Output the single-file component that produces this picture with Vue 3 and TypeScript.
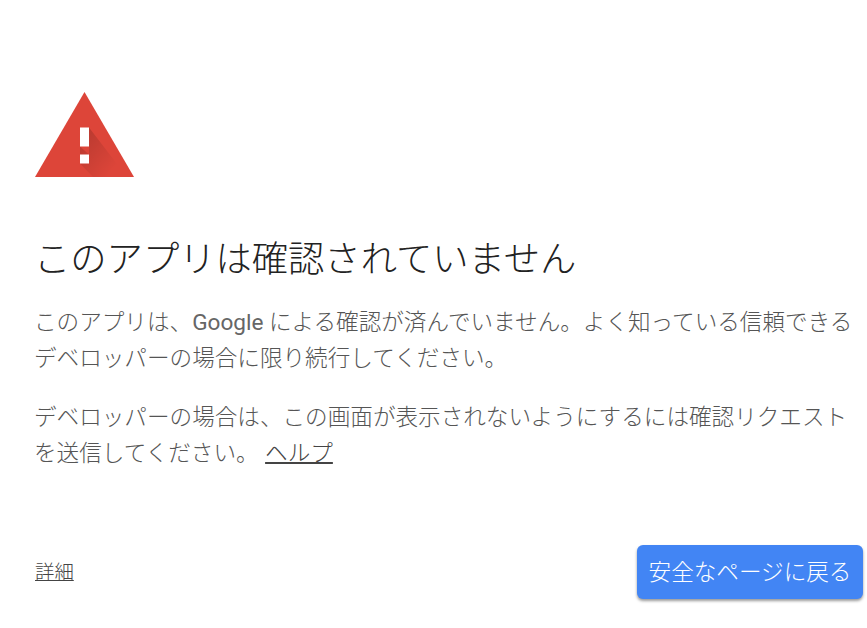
<script setup lang="ts">
const title: string = 'このアプリは確認されていません'
</script>

<template>
  <main class="page">
    <svg class="icon" viewBox="0 0 99 85" width="99" height="85" aria-hidden="true">
      <defs>
        <linearGradient id="fade" gradientUnits="userSpaceOnUse" x1="50" y1="40" x2="85" y2="70">
          <stop offset="0" stop-color="#000" stop-opacity="0.16" />
          <stop offset="1" stop-color="#000" stop-opacity="0" />
        </linearGradient>
      </defs>
      <path d="M49.5 0 L99 85 H0 Z" fill="#dd4539" />
      <path d="M54 35.5 L92 85 L58 85 L45 71.5 L45 54.5 L54 62.5 Z" fill="url(#fade)" />
      <rect x="45" y="35.5" width="9" height="19" fill="#fff" />
      <rect x="45" y="62.5" width="9" height="9" fill="#fff" />
    </svg>
    <h1 class="title">{{ title }}</h1>
    <p class="text">このアプリは、<span class="brand">Google</span> による確認が済んでいません。よく知っている信頼できるデベロッパーの場合に限り続行してください。</p>
    <p class="text">デベロッパーの場合は、この画面が表示されないようにするには確認リクエストを送信してください。 <a class="link">ヘルプ</a></p>
    <div class="actions">
      <a class="details">詳細</a>
      <button class="back" type="button">安全なページに戻る</button>
    </div>
  </main>
</template>

<style scoped>
.page {
  box-sizing: border-box;
  height: 628px;
  padding: 92px 4px 0 35px;
  background: #fff;
  font-family: Roboto, "Noto Sans CJK JP", sans-serif;
  display: flex;
  flex-direction: column;
}
.icon {
  display: block;
  flex: none;
}
.title {
  margin: 59px 0 0 -1px;
  font-size: 36.3px;
  line-height: 48px;
  font-weight: 300;
  color: #222;
}
.text {
  margin: 21px 0 0 -1px;
  font-size: 22.6px;
  line-height: 36px;
  font-weight: 300;
  color: #555;
}
.text + .text {
  margin-top: 23px;
}
.brand {
  font-weight: 400;
  color: #666;
}
.link {
  margin-left: 1px;
  color: #444;
  text-decoration: underline;
  text-decoration-thickness: 2px;
}
.actions {
  margin-top: 73px;
  display: flex;
  justify-content: space-between;
  align-items: center;
}
.details {
  margin-bottom: 4px;
  font-size: 19.4px;
  font-weight: 300;
  color: #444;
  text-decoration: underline;
}
.back {
  width: 226px;
  height: 54px;
  padding: 0 0 4px;
  border: 0;
  border-radius: 6px;
  background: #4285f4;
  color: #fff;
  font: 300 22.6px Roboto, "Noto Sans CJK JP", sans-serif;
  box-shadow: 0 2px 3px rgba(0, 0, 0, 0.4);
}
</style>
